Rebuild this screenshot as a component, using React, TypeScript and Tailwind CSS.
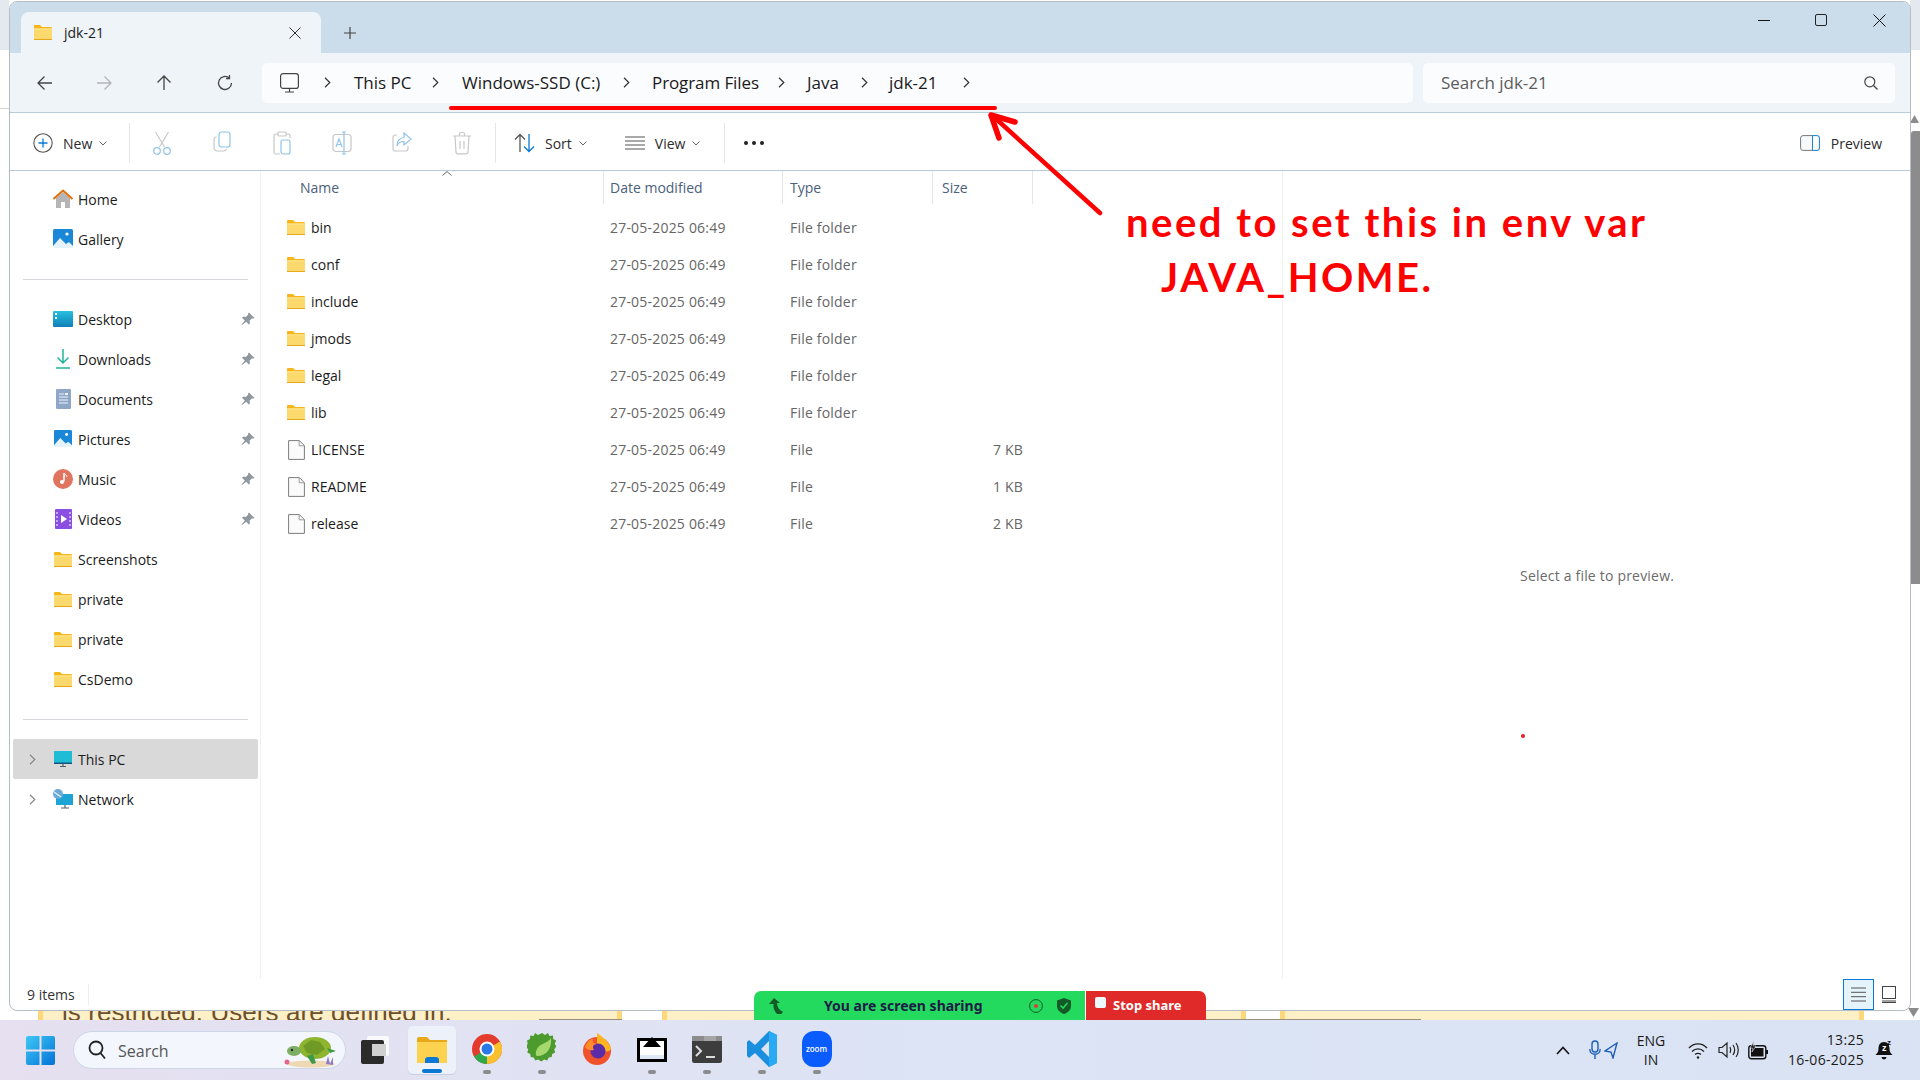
import React from "react";

const Folder = ({ w = 18, h = 15 }: { w?: number; h?: number }) => (
  <svg width={w} height={h} viewBox="0 0 18 15" className="shrink-0">
    <path d="M0 1a1 1 0 0 1 1-1h5l2 2h9a1 1 0 0 1 1 1v3H0z" fill="#f6b519" />
    <path d="M0 3.4h18V14a1 1 0 0 1-1 1H1a1 1 0 0 1-1-1z" fill="#fbd96d" />
    <path d="M0 3.4h18v1H0z" fill="#fde99b" />
    <path d="M0 14h18v1H0z" fill="#e9a81a" />
  </svg>
);
const FileIcon = () => (
  <svg width="17" height="20" viewBox="0 0 17 20" className="shrink-0">
    <path d="M.6.6h10.8l5 5v13.8H.6z" fill="#fbfbfb" stroke="#7d7d7d" strokeWidth="1" />
    <path d="M11.2.8v5h5" fill="none" stroke="#9a9a9a" strokeWidth="1" />
  </svg>
);
const Chevron = ({ c = "#333" }: { c?: string }) => (
  <svg width="7" height="11" viewBox="0 0 7 11" className="shrink-0"><path d="M1 .8l4.8 4.7L1 10.2" fill="none" stroke={c} strokeWidth="1.2" /></svg>
);
const Down = () => (
  <svg width="8" height="5" viewBox="0 0 8 5"><path d="M.5.5L4 4l3.5-3.5" fill="none" stroke="#666" strokeWidth="1" /></svg>
);
const Pin = () => (
  <svg width="14" height="14" viewBox="0 0 14 14">
    <path d="M8 .5l5.500 5.500-1.500.8-1-.5-2.400 2.400.4 2.600-1.200 1.200-2.700-2.700L1 13l-.4-.4 3.200-4.200L1 5.700 2.200 4.500l2.600.4L7.200 2.500l-.2-.9z" fill="#8f979f" />
  </svg>
);

const NavArrow = ({ d, c }: { d: string; c: string }) => (
  <svg width="18" height="18" viewBox="0 0 18 18"><path d={d} fill="none" stroke={c} strokeWidth="1.3" /></svg>
);

const HomeIcon = () => (
  <svg width="20" height="20" viewBox="0 0 20 20">
    <path d="M3 9l7-6 7 6v10H12v-6H8v6H3z" fill="#b5b5b5" />
    <path d="M.5 10L10 1.500 19.500 10" fill="none" stroke="#e2700f" strokeWidth="2" />
  </svg>
);
const PicIcon = ({ w = 20 }: { w?: number }) => (
  <svg width={w} height="20" viewBox="0 0 20 20">
    <rect x="0" y="0" width="20" height="19" rx="1.500" fill="#1a87d8" />
    <path d="M0 17l7-8 6 6 3-2 4 4v2H0z" fill="#e6f3fb" />
    <circle cx="14" cy="5" r="1.600" fill="#fff" />
  </svg>
);
const DesktopIcon = () => (
  <svg width="20" height="16" viewBox="0 0 20 16">
    <defs><linearGradient id="dg" x1="0" y1="0" x2="0" y2="1"><stop offset="0" stopColor="#29c0de" /><stop offset="1" stopColor="#0f7fb8" /></linearGradient></defs>
    <rect width="20" height="16" rx="1" fill="url(#dg)" />
    <rect x="2" y="2" width="2" height="2" fill="#fff" /><rect x="2" y="6" width="2" height="2" fill="#dff" />
  </svg>
);
const DownIcon = () => (
  <svg width="16" height="20" viewBox="0 0 16 20"><path d="M8 0v14M2.500 8.500L8 14l5.500-5.500M1 19h14" fill="none" stroke="#21b59b" strokeWidth="1.500" /></svg>
);
const DocIcon = () => (
  <svg width="15" height="20" viewBox="0 0 15 20"><rect width="15" height="20" rx="1" fill="#8ea7c6" /><path d="M3 5h5M3 8h9M3 11h9M3 14h9" stroke="#eef3f8" strokeWidth="1" /><rect x="9" y="4" width="3" height="2" fill="#eef3f8" /></svg>
);
const MusicIcon = () => (
  <svg width="20" height="20" viewBox="0 0 20 20"><circle cx="10" cy="10" r="10" fill="#e0745f" /><path d="M11 4v8.500" stroke="#fff" strokeWidth="1.500" /><circle cx="9" cy="13" r="2" fill="#fff" /><path d="M11 4c1 2 3 2 3 4" stroke="#fff" fill="none" /></svg>
);
const VideoIcon = () => (
  <svg width="17" height="20" viewBox="0 0 17 20"><rect width="17" height="20" rx="1" fill="#8a4fe0" /><path d="M6 6l6 4-6 4z" fill="#fff" /><path d="M2 3v14M15 3v14" stroke="#d9c6f8" strokeWidth="1.500" strokeDasharray="2 2" /></svg>
);
const PcIcon = () => (
  <svg width="18" height="16" viewBox="0 0 18 16"><rect width="18" height="12.500" fill="#1fbcd6" /><rect y="11.500" width="18" height="1.500" fill="#15557e" /><path d="M6 15.500h6M9 13v2" stroke="#4d5f6b" strokeWidth="1.200" /></svg>
);
const NetIcon = () => (
  <svg width="20" height="20" viewBox="0 0 20 20"><rect x="3" y="5" width="17" height="11" fill="#1ea3d6" /><path d="M8 19h8M12 16v3" stroke="#4d5f6b" strokeWidth="1.200" /><circle cx="5" cy="5" r="5" fill="#6eaad8" /><path d="M1 3l7 5" stroke="#d8ecf8" strokeWidth="1.500" /></svg>
);

const SideRow = ({ icon, label, pin, sel, chev }: { icon: React.ReactNode; label: string; pin?: boolean; sel?: boolean; chev?: boolean }) => (
  <div className={`relative flex h-10 items-center rounded-[2px] ${sel ? "bg-[#d9d9d9]" : ""}`}>
    <div className="flex w-[16px] ml-[11px] justify-center">{chev && <Chevron c="#888" />}</div>
    <div className="ml-[13px] flex w-[20px] justify-center">{icon}</div>
    <span className="ml-[5px] text-[14px] text-[#1b1b1b]">{label}</span>
    {pin && <span className="absolute right-[3px] top-[13px]"><Pin /></span>}
  </div>
);

const files: [string, string, string][] = [
  ["bin", "File folder", ""], ["conf", "File folder", ""], ["include", "File folder", ""], ["jmods", "File folder", ""],
  ["legal", "File folder", ""], ["lib", "File folder", ""], ["LICENSE", "File", "7 KB"], ["README", "File", "1 KB"], ["release", "File", "2 KB"],
];

const B = "#8fc4e8";
const G = "#c7c7c7";
const TB = ({ children }: { children: React.ReactNode }) => <div className="flex w-[60px] justify-center">{children}</div>;

const Toolbar = () => (
  <div className="flex h-[58px] shrink-0 items-center border-b border-[#b9cbdb] bg-white pt-[3px]">
    <div className="flex w-[119px] items-center pl-[23px]">
      <svg width="20" height="20" viewBox="0 0 20 20"><circle cx="10" cy="10" r="9.200" fill="none" stroke="#555" strokeWidth="1.100" /><path d="M10 5.500v9M5.500 10h9" stroke="#0a78d4" strokeWidth="1.300" /></svg>
      <span className="ml-[10px] text-[14px] text-[#2b2b2b]">New</span>
      <span className="ml-[7px] flex"><Down /></span>
    </div>
    <div className="h-10 w-px bg-[#e2e6ea]" />
    <div className="ml-[2px] flex">
      <TB><svg width="18" height="24" viewBox="0 0 18 24" fill="none" stroke={B} strokeWidth="1.200"><path d="M2.500 1l9 15M15.500 1l-9 15" stroke={G} /><circle cx="4" cy="20" r="3.300" /><circle cx="14" cy="20" r="3.300" /></svg></TB>
      <TB><svg width="18" height="21" viewBox="0 0 18 21" fill="none" strokeWidth="1.200"><rect x="6" y="1" width="11" height="15" rx="2.500" stroke={B} /><path d="M3.500 5.500C2 6 1 7 1 8.500v8C1 18.500 2.500 20 4.500 20h6c1.500 0 2.500-1 3-2" stroke={G} /></svg></TB>
      <TB><svg width="18" height="24" viewBox="0 0 18 24" fill="none" strokeWidth="1.200"><path d="M5 3H2.500C1.500 3 1 3.500 1 4.500v17c0 1 .5 1.500 1.500 1.500H7M13 3h2.500c1 0 1.500.5 1.500 1.500V7" stroke={G} /><rect x="5" y="1" width="8" height="4" rx="1" stroke={G} /><rect x="8" y="9" width="9" height="14" rx="2" stroke={B} /></svg></TB>
      <TB><svg width="20" height="24" viewBox="0 0 20 24" fill="none" strokeWidth="1.200"><rect x="1" y="3.500" width="18" height="17" rx="3" stroke={G} /><path d="M12 1v22M10 1h4M10 23h4" stroke={B} /><path d="M4 16l3-8 3 8M5 13.500h4" stroke={B} /></svg></TB>
      <TB><svg width="20" height="22" viewBox="0 0 20 22" fill="none" strokeWidth="1.200"><path d="M5 4H3.500C2 4 1 5 1 6.500v11C1 19 2 20 3.500 20h10c1.500 0 2.500-1 2.500-2.500V15" stroke={G} /><path d="M12 2l7 6-7 6v-3.500C8 10.500 6 12 5 15c0-5 3-8 7-8.500z" stroke={B} /></svg></TB>
      <TB><svg width="18" height="24" viewBox="0 0 18 24" fill="none" stroke={G} strokeWidth="1.200"><path d="M0 5h18M6.500 5V3c0-1 .5-1.500 1.500-1.500h2c1 0 1.500.5 1.500 1.500v2M2 5l1 16c0 1 .8 1.800 2 1.800h8c1.200 0 2-.8 2-1.800l1-16M7 10v8M11 10v8" /></svg></TB>
    </div>
    <div className="ml-[3px] h-10 w-px bg-[#e2e6ea]" />
    <div className="flex items-center pl-[18px]">
      <svg width="22" height="20" viewBox="0 0 22 20" fill="none" strokeWidth="1.300"><path d="M6 19V1.500M1 6.500l5-5 5 5" stroke="#555" /><path d="M15 1v17.500M10 13.500l5 5 5-5" stroke="#0a78d4" /></svg>
      <span className="ml-[9px] text-[14px] text-[#2b2b2b]">Sort</span>
      <span className="ml-[7px] flex"><Down /></span>
    </div>
    <div className="ml-[38px] flex items-center">
      <svg width="20" height="14" viewBox="0 0 20 14" fill="none" stroke="#555" strokeWidth="1.200"><path d="M0 1h20M0 5h20M0 9h20M0 13h20" /></svg>
      <span className="ml-[10px] text-[14px] text-[#2b2b2b]">View</span>
      <span className="ml-[7px] flex"><Down /></span>
    </div>
    <div className="ml-[24px] h-10 w-px bg-[#e2e6ea]" />
    <div className="ml-[19px] flex gap-[4px]">
      <i className="size-[4px] rounded-full bg-[#222]" /><i className="size-[4px] rounded-full bg-[#222]" /><i className="size-[4px] rounded-full bg-[#222]" />
    </div>
    <div className="ml-auto flex items-center pr-[28px]">
      <svg width="20" height="16" viewBox="0 0 20 16" fill="none"><rect x=".6" y=".6" width="18.800" height="14.800" rx="2.500" fill="#f7f9fb" stroke="#777" /><path d="M12.500.6h4.400a2.500 2.500 0 0 1 2.500 2.500v9.800a2.500 2.500 0 0 1-2.500 2.500h-4.400z" fill="#fff" stroke="#1a86d8" /></svg>
      <span className="ml-[11px] text-[14px] text-[#2b2b2b]">Preview</span>
    </div>
  </div>
);

const Window = () => (
  <div className="absolute left-[9px] top-[1px] flex h-[1010px] w-[1902px] flex-col overflow-hidden rounded-[8px] border border-[#b4bcc4] bg-white">
    {/* title */}
    <div className="flex h-[51px] shrink-0 items-end bg-[#cbdcea] pl-[11px]">
      <div className="flex h-[41px] w-[300px] items-center rounded-t-[8px] bg-[#eff4f9] pl-[13px] pr-[20px]">
        <Folder w={18} h={15} />
        <span className="ml-[12px] text-[14px] text-[#1b1b1b]">jdk-21</span>
        <svg className="ml-auto" width="12" height="12" viewBox="0 0 12 12"><path d="M.5.500l11 11M11.500.500l-11 11" stroke="#333" strokeWidth="1" /></svg>
      </div>
      <div className="ml-[23px] flex h-[41px] items-center">
        <svg width="12" height="12" viewBox="0 0 12 12"><path d="M6 0v12M0 6h12" stroke="#444" strokeWidth="1.200" /></svg>
      </div>
      <div className="ml-auto flex h-[51px] items-center self-start pb-[15px]">
        <span className="h-px w-[12px] bg-[#111]" />
        <span className="ml-[45px] h-[12px] w-[12px] rounded-[2px] border-[1.5px] border-[#222]" />
        <svg className="ml-[46px] mr-[24px]" width="13" height="13" viewBox="0 0 13 13"><path d="M.5.500l12 12M12.500.500l-12 12" stroke="#111" strokeWidth="1" /></svg>
      </div>
    </div>
    {/* nav */}
    <div className="flex h-[60px] shrink-0 items-center border-b border-[#b9cbdb] bg-[#eff4f9]">
      <div className="flex w-[252px] items-center pl-[26px]">
        <NavArrow d="M16 9H2M8.500 2.500L2 9l6.500 6.500" c="#444" />
        <div className="ml-[41px]"><NavArrow d="M2 9h14M9.500 2.500L16 9l-6.500 6.500" c="#b5b5b5" /></div>
        <div className="ml-[42px]"><NavArrow d="M9 16V2M2.500 8.500L9 2l6.500 6.500" c="#444" /></div>
        <div className="ml-[43px]"><NavArrow d="M15.500 9a6.500 6.500 0 1 1-2.200-4.900M13.500 1v3.500H10" c="#444" /></div>
      </div>
      <div className="flex h-[40px] w-[1151px] items-center rounded-[5px] bg-[#fbfcfe] pl-[18px]">
        <svg width="19" height="20" viewBox="0 0 19 20" fill="none" stroke="#444" strokeWidth="1.200"><rect x=".6" y=".6" width="17.800" height="14.800" rx="2.500" /><path d="M9.500 15.500v3M5 19h9" /></svg>
        <div className="ml-[25px] flex"><Chevron /></div>
        <span className="ml-[23px] w-[78px] text-[17px] whitespace-nowrap text-[#1a1a1a]">This PC</span>
        <Chevron />
        <span className="ml-[23px] w-[161px] text-[17px] whitespace-nowrap text-[#1a1a1a]">Windows-SSD (C:)</span>
        <Chevron />
        <span className="ml-[22px] w-[126px] text-[17px] tracking-[-0.1px] whitespace-nowrap text-[#1a1a1a]">Program Files</span>
        <Chevron />
        <span className="ml-[22px] w-[54px] text-[17px] whitespace-nowrap text-[#1a1a1a]">Java</span>
        <Chevron />
        <span className="ml-[21px] w-[74px] text-[17px] whitespace-nowrap text-[#1a1a1a]">jdk-21</span>
        <Chevron />
      </div>
      <div className="ml-[10px] flex h-[40px] w-[472px] items-center justify-between rounded-[5px] bg-[#fbfcfe] pl-[18px] pr-[17px]">
        <span className="text-[17px] text-[#5c5c5c]">Search jdk-21</span>
        <svg width="14" height="14" viewBox="0 0 14 14" fill="none" stroke="#444" strokeWidth="1.200"><circle cx="5.800" cy="5.800" r="5" /><path d="M9.500 9.500l4 4" /></svg>
      </div>
    </div>
    <Toolbar />
    {/* body */}
    <div className="flex min-h-0 flex-1">
      <aside className="w-[251px] shrink-0 border-r border-[#f0f0f0] pl-[3px] pr-[2px] pt-[8px]">
        <SideRow icon={<HomeIcon />} label="Home" />
        <SideRow icon={<PicIcon />} label="Gallery" />
        <div className="flex h-10 items-center px-[10px]"><div className="h-px w-full bg-[#d5d9dd]" /></div>
        <SideRow icon={<DesktopIcon />} label="Desktop" pin />
        <SideRow icon={<DownIcon />} label="Downloads" pin />
        <SideRow icon={<DocIcon />} label="Documents" pin />
        <SideRow icon={<PicIcon w={18} />} label="Pictures" pin />
        <SideRow icon={<MusicIcon />} label="Music" pin />
        <SideRow icon={<VideoIcon />} label="Videos" pin />
        <SideRow icon={<Folder />} label="Screenshots" />
        <SideRow icon={<Folder />} label="private" />
        <SideRow icon={<Folder />} label="private" />
        <SideRow icon={<Folder />} label="CsDemo" />
        <div className="flex h-10 items-center px-[10px]"><div className="h-px w-full bg-[#d5d9dd]" /></div>
        <SideRow icon={<PcIcon />} label="This PC" sel chev />
        <SideRow icon={<NetIcon />} label="Network" chev />
      </aside>
      <main className="relative w-[1022px] shrink-0 border-r border-[#f0f0f0]">
        <div className="flex h-[33px] items-center text-[14px] text-[#4c607a]">
          <div className="relative flex h-full w-[343px] items-center border-r border-[#e5e5e5] pl-[39px]">
            Name
            <svg className="absolute left-[181px] top-0" width="10" height="5" viewBox="0 0 10 5"><path d="M.5 4.500L5 .5l4.500 4" fill="none" stroke="#666" /></svg>
          </div>
          <div className="flex h-full w-[179px] items-center border-r border-[#e5e5e5] pl-[6px]">Date modified</div>
          <div className="flex h-full w-[150px] items-center border-r border-[#e5e5e5] pl-[7px]">Type</div>
          <div className="flex h-full w-[100px] items-center border-r border-[#e5e5e5] pl-[9px]">Size</div>
        </div>
        <div className="pt-[5px]">
          {files.map(([n, t, s]) => (
            <div key={n} className="flex h-[37px] items-center text-[14px] text-[#666]">
              <div className="flex w-[343px] items-center pl-[26px]">
                <div className="flex w-[18px] justify-center">{t === "File" ? <FileIcon /> : <Folder />}</div>
                <span className="ml-[6px] text-[#1b1b1b]">{n}</span>
              </div>
              <div className="w-[179px] pl-[6px] tracking-[0.2px]">27-05-2025 06:49</div>
              <div className="w-[150px] pl-[7px] tracking-[0.2px]">{t}</div>
              <div className="w-[90px] text-right tracking-[0.2px]">{s}</div>
            </div>
          ))}
        </div>
      </main>
      <section className="relative flex-1">
        <span className="absolute left-[237px] top-[394px] text-[14px] tracking-[0.2px] text-[#6b6b6b]">Select a file to preview.</span>
        <span className="absolute left-[238px] top-[563px] size-[4px] rounded-full bg-[#e02020]" />
      </section>
    </div>
    {/* status */}
    <div className="relative flex h-[31px] shrink-0 items-center pl-[17px] text-[14px] text-[#333]">
      <span>9 items</span>
      <span className="ml-[13px] h-[22px] w-px bg-[#eeeeee]" />
      <div className="ml-auto flex items-center self-start pr-[14px]">
        <div className="flex h-[31px] w-[31px] items-center justify-center border border-[#0a78d4] bg-[#e5f3fb]">
          <svg width="15" height="15" viewBox="0 0 15 15"><path d="M0 1h15M0 5.300h15M0 9.700h15M0 14h15" stroke="#555" strokeWidth="1" /></svg>
        </div>
        <svg className="ml-[8px]" width="14" height="17" viewBox="0 0 14 17" fill="none" stroke="#444"><rect x=".5" y=".5" width="13" height="12" /><path d="M0 15h14M0 16.500h14" /></svg>
      </div>
    </div>
  </div>
);

const Ind = ({ c = "#8c8c8c" }: { c?: string }) => <span className="absolute bottom-[6px] left-1/2 h-[4px] w-[8px] -translate-x-1/2 rounded-full" style={{ background: c }} />;
const App_ = ({ children, ind }: { children: React.ReactNode; ind?: boolean }) => (
  <div className="relative flex h-[60px] w-[55px] shrink-0 items-center justify-center pb-[2px]">{children}{ind && <Ind />}</div>
);

const Taskbar = () => (
  <div className="flex h-[60px] items-center bg-gradient-to-r from-[#e6e0f0] via-[#dce4f5] to-[#dae3f4]">
    <div className="ml-[26px]">
      <svg width="29" height="29" viewBox="0 0 29 29"><defs><linearGradient id="wg" x1="0" y1="0" x2="1" y2="1"><stop offset="0" stopColor="#3fc8f6" /><stop offset="1" stopColor="#0472d6" /></linearGradient></defs><path d="M0 2a2 2 0 0 1 2-2h11.500v13.500H0zM15.500 0H27a2 2 0 0 1 2 2v11.500H15.500zM0 15.500h13.500V29H2a2 2 0 0 1-2-2zM15.500 15.500H29V27a2 2 0 0 1-2 2H15.500z" fill="url(#wg)" /></svg>
    </div>
    <div className="relative ml-[18px] flex h-[38px] w-[273px] items-center rounded-full border border-[#cdd6e6] bg-[#f3f6fc] pl-[14px]">
      <svg width="18" height="20" viewBox="0 0 18 20" fill="none" stroke="#222" strokeWidth="1.800"><circle cx="8" cy="8" r="6.500" /><path d="M12.500 13l4.500 5.500" /></svg>
      <span className="ml-[12px] pt-[1px] text-[16px] text-[#555]">Search</span>
      <svg className="absolute right-[6px] top-[2px]" width="56" height="34" viewBox="0 0 56 34">
        <ellipse cx="28" cy="30" rx="24" ry="3.500" fill="#efd9b4" />
        <ellipse cx="32" cy="14" rx="16" ry="11" fill="#8fb52f" />
        <path d="M20 12l8-6 9 2 5 7-8 6-10-2z" fill="#6f9a25" />
        <ellipse cx="11" cy="17" rx="7" ry="5" fill="#7cae64" />
        <path d="M24 22l5 8 4-1-3-9zM44 14l9 3-6 2z" fill="#3c9a48" />
        <circle cx="9" cy="16" r="1.200" fill="#223" />
        <circle cx="4" cy="28" r="2.500" fill="#e5648f" />
        <path d="M43 30l2-8 2 8 3-7 0 8z" fill="#8e7ac9" />
      </svg>
    </div>
    <div className="flex h-[60px] w-[58px] shrink-0 items-center justify-center">
      <div className="relative h-[28px] w-[28px]">
        <span className="absolute right-0 top-0 h-[20px] w-[22px] rounded-[2px] bg-white/80" />
        <span className="absolute bottom-0 left-0 h-[24px] w-[23px] rounded-[2px] bg-[#2b2b2b]" />
        <span className="absolute right-[3px] top-[8px] h-[12px] w-[14px] bg-[#d0d0d0]" />
      </div>
    </div>
    <div className="relative flex h-[60px] w-[55px] shrink-0 items-center justify-center">
      <div className="absolute left-[4px] top-[6px] h-[48px] w-[48px] rounded-[5px] bg-[#edf1f9] shadow-[0_1px_1px_#c5cfe0]" />
      <svg className="relative" width="30" height="26" viewBox="0 0 30 26"><path d="M0 2a2 2 0 0 1 2-2h8l3 3h17v5H0z" fill="#e9a81a" /><path d="M0 5h30v21H0z" fill="#fcd24f" /><path d="M8 26v-3a3 3 0 0 1 3-3h8a3 3 0 0 1 3 3v3z" fill="#0a78d4" /></svg>
      <span className="absolute bottom-[7px] left-[18px] h-[4px] w-[20px] rounded-full bg-[#0a78d4]" />
    </div>
    <App_ ind>
      <svg width="30" height="30" viewBox="0 0 30 30"><circle cx="15" cy="15" r="15" fill="#e33b2e" /><path d="M15 15L2 22.500A15 15 0 0 0 15 30z" fill="#2fa84f" /><path d="M15 15l13 -7.500A15 15 0 0 1 15 30z" fill="#fbc02d" /><circle cx="15" cy="15" r="7.500" fill="#fff" /><circle cx="15" cy="15" r="5.500" fill="#2979e8" /></svg>
    </App_>
    <App_ ind>
      <svg width="30" height="34" viewBox="0 0 30 34"><path d="M15 1l3 2 3-2 1.500 3 3.500-.5.200 3.500 3 1.500-1.500 3 1.500 3-2 3 1 3-3 1.500-.5 3-3 .5-1.500 3-3-1-3 2-3-2-3 1-1.500-3-3-.5-.5-3-3-1.500 1-3-2-3 1.500-3L0 8.500 3 7l.2-3.500 3.500.5L8 1l3 2z" fill="#4d9a2e" /><path d="M24 6c1 10-4 18-14 18-1 0-2-3 0-7 3-6 10-5 14-11z" fill="#a5d86d" /></svg>
    </App_>
    <App_>
      <svg width="28" height="32" viewBox="0 0 28 32"><circle cx="14" cy="18" r="14" fill="#f0532b" /><path d="M14 0c6 4 11 8 14 15-2 6-6 2-14 3z" fill="#ffb420" /><circle cx="15" cy="18" r="7.500" fill="#5b2ba8" /><path d="M2 14c2-6 6-8 8-8-1 3 0 4 4 5-4 0-5 3-3 6-4 1-8-1-9-3z" fill="#ff8b2b" /></svg>
    </App_>
    <App_ ind>
      <svg width="30" height="26" viewBox="0 0 30 26"><rect x="1.500" y="3.500" width="27" height="21" fill="#fff" stroke="#000" strokeWidth="3" /><path d="M15 1l9 10H6z" fill="#000" /><path d="M3 19h24v4H3z" fill="#dfe7f5" /></svg>
    </App_>
    <App_ ind>
      <svg width="30" height="27" viewBox="0 0 30 27"><rect width="30" height="27" rx="2.500" fill="#3d3d3d" /><rect width="30" height="5" fill="#8c8c8c" /><rect x="12" width="12" height="5" fill="#a5a5a5" /><path d="M4 10l5 5-5 5" fill="none" stroke="#dcdcdc" strokeWidth="2" /><path d="M14 21h9" stroke="#dcdcdc" strokeWidth="2" /></svg>
    </App_>
    <App_ ind>
      <svg width="30" height="36" viewBox="0 0 30 36"><path d="M22 0l8 4v28l-8 4-14-14-6 5-2-2v-14l2-2 6 5zM22 10l-8 8 8 8z" fill="#1a8fe0" /><path d="M22 0l8 4v28l-8 4z" fill="#29aaf4" /></svg>
    </App_>
    <App_ ind>
      <div className="flex h-[36px] w-[30px] items-center justify-center rounded-[12px] bg-[#0b5cff] text-[8px] font-semibold text-white">zoom</div>
    </App_>
    <div className="ml-auto flex items-center pr-[16px] text-[#1a1a1a]">
      <div className="flex w-[34px] justify-center">
        <svg width="14" height="9" viewBox="0 0 14 9"><path d="M1 8l6-6.500L13 8" fill="none" stroke="#111" strokeWidth="1.600" /></svg>
      </div>
      <div className="flex w-[46px] items-center justify-center gap-[3px]">
        <svg width="12" height="20" viewBox="0 0 12 20" fill="none" stroke="#1c5fb8" strokeWidth="1.400"><rect x="3" y="1" width="6" height="11" rx="3" /><path d="M.8 9c0 7 10.400 7 10.400 0M6 15v4" /></svg>
        <svg width="14" height="17" viewBox="0 0 14 17" fill="none" stroke="#1c5fb8" strokeWidth="1.400"><path d="M13 1L1 9l6 1 2 6z" /></svg>
      </div>
      <div className="w-[50px] text-center text-[14px] leading-[19px]">ENG<br />IN</div>
      <div className="ml-[8px] flex w-[28px] justify-center">
        <svg width="20" height="17" viewBox="0 0 20 17" fill="none" stroke="#222" strokeWidth="1.400"><path d="M1 6c5-5.500 13-5.500 18 0M4 9.500c3.500-3.500 8.500-3.500 12 0M7 12.500c2-1.500 4-1.500 6 0" /><circle cx="10" cy="15.500" r="1.200" fill="#222" stroke="none" /></svg>
      </div>
      <div className="flex w-[32px] justify-center">
        <svg width="21" height="18" viewBox="0 0 21 18" fill="none" stroke="#222" strokeWidth="1.200"><path d="M1 6.500h3L9 2v14l-5-4.500H1zM12 6c1 2 1 4 0 6M15 4c2 3 2 7 0 10M18 2c3 4 3 10 0 14" /></svg>
      </div>
      <div className="flex w-[28px] justify-center">
        <svg width="20" height="19" viewBox="0 0 20 19"><rect x=".8" y="4.800" width="17" height="13" rx="2.500" fill="none" stroke="#111" strokeWidth="1.400" /><rect x="3" y="7" width="12.500" height="8.500" fill="#111" /><rect x="18" y="9" width="2" height="4" fill="#111" /><path d="M6 0L2 7h3l-1 4 4-6H5z" fill="#111" stroke="#dce4f5" strokeWidth=".6" /></svg>
      </div>
      <div className="w-[92px] text-right text-[14px] leading-[20px] tracking-[0.3px]">13:25<br />16-06-2025</div>
      <div className="flex w-[40px] justify-center">
        <svg width="18" height="24" viewBox="0 0 18 24"><path d="M9 4C5 4 3.500 7 3.500 11c0 3-1.500 4.500-3 6h17c-1.500-1.500-3-3-3-6 0-4-1.500-7-5.500-7z" fill="#111" /><path d="M6.500 19h5a2.500 2.500 0 0 1-5 0z" fill="#111" /><text x="7" y="13" fontSize="9" fontWeight="700" fill="#fff" fontFamily="Liberation Sans">z</text><text x="12" y="7" fontSize="8" fontWeight="700" fill="#111" fontFamily="Liberation Sans">z</text></svg>
      </div>
    </div>
  </div>
);

const ZoomBar = () => (
  <div className="absolute bottom-0 left-[754px] flex h-[29px] w-[452px]">
    <div className="flex w-[331px] items-center rounded-tl-[7px] bg-[#23da5f] pl-[15px]">
      <svg width="16" height="16" viewBox="0 0 16 16"><path d="M5 0l6 5H8c0 4 2 7 6 9-1 1-1.500 2-2 2H8C5 13 4 9 4.500 6H0z" fill="#135a26" /></svg>
      <span className="ml-[39px] text-[14px] font-bold whitespace-nowrap text-[#1b1b46] font-['Noto_Sans',sans-serif]">You are screen sharing</span>
      <svg className="ml-[46px]" width="14" height="14" viewBox="0 0 14 14"><circle cx="7" cy="7" r="6.400" fill="none" stroke="#135a26" /><circle cx="7" cy="7" r="2" fill="#e03a3a" /></svg>
      <svg className="ml-[14px]" width="14" height="16" viewBox="0 0 14 16"><path d="M7 0l7 2.500V8c0 4-3 6.500-7 8-4-1.500-7-4-7-8V2.500z" fill="#135a26" /><path d="M3.500 7.500L6 10l4.500-5" fill="none" stroke="#23da5f" strokeWidth="1.600" /></svg>
    </div>
    <div className="w-px bg-white" />
    <div className="flex flex-1 items-start rounded-tr-[7px] bg-[#e02a2a] pl-[9px] pt-[6px]">
      <span className="size-[11px] rounded-[2px] bg-[#ecf8fb]" />
      <span className="-mt-[1px] ml-[7px] text-[13px] leading-[18px] font-bold whitespace-nowrap text-white font-['Noto_Sans',sans-serif]">Stop share</span>
    </div>
  </div>
);

export default function App() {
  return (
    <div className="flex h-screen w-screen flex-col overflow-hidden bg-white font-['Open_Sans',sans-serif]">
      <div className="relative h-[1020px] overflow-hidden bg-white">
        <div className="absolute left-0 top-0 h-[50px] w-[9px] bg-[#e4e8ef]" />
        <div className="absolute left-0 top-[108px] h-px w-[9px] bg-[#d5d5d5]" />
        <div className="absolute right-0 top-0 h-[50px] w-[10px] bg-[#e4e8ef]" />
        {/* yellow background document */}
        <div className="absolute left-[38px] top-[1011px] h-[9px] w-[584px] overflow-hidden border-x-[5px] border-[#fcd87a] bg-[#fdefc6] font-['Liberation_Sans',sans-serif]">
          <span className="absolute left-[19px] -top-[14px] text-[26px] leading-[30px] tracking-[0.07px] whitespace-nowrap text-[#6e4f2c]">is restricted. Users are defined in:</span>
        </div>
        <div className="absolute left-[662px] top-[1011px] h-[9px] w-[584px] border-x-[5px] border-[#fcd87a] bg-[#fdefc6]" />
        <div className="absolute left-[1280px] top-[1011px] h-[9px] w-[584px] border-x-[5px] border-[#fcd87a] bg-[#fdefc6]" />
        <div className="absolute left-[539px] top-[1019px] h-px w-[83px] bg-[#9a8f78]" />
        <div className="absolute left-[1206px] top-[1019px] h-px w-[215px] bg-[#9a8f78]" />
        {/* scrollbar of the window behind */}
        <svg className="absolute right-[1px] top-[115px]" width="9" height="8" viewBox="0 0 9 8"><path d="M4.500 0L9 8H0z" fill="#8c8c8c" /></svg>
        <div className="absolute right-0 top-[131px] h-[453px] w-[9px] rounded-tl-[3px] bg-[#8c8c8c]" />
        <svg className="absolute right-[1px] top-[1008px]" width="11" height="9" viewBox="0 0 11 9"><path d="M5.500 9L11 0H0z" fill="#8c8c8c" /></svg>
        <Window />
        {/* annotations */}
        <div className="absolute left-[449px] top-[106px] h-[4px] w-[548px] rounded-full bg-[#ff0000]" />
        <svg className="absolute left-[980px] top-[105px]" width="130" height="115" viewBox="0 0 130 115">
          <path d="M120 108L14 12" stroke="#ff0000" strokeWidth="4.500" strokeLinecap="round" />
          <path d="M11 10L35 17M11 10L19 33" stroke="#ff0000" strokeWidth="5.500" strokeLinecap="round" />
        </svg>
        <div className="absolute left-[1126px] top-[196px] font-['Lato',sans-serif] text-[40px] leading-[52px] font-bold tracking-[2.500px] whitespace-nowrap text-[#ff0000]">need to set this in env var</div>
        <div className="absolute left-[1161px] top-[251px] font-['Lato',sans-serif] text-[40px] leading-[52px] font-bold tracking-[2.500px] whitespace-nowrap text-[#ff0000]">JAVA_HOME.</div>
        <ZoomBar />
      </div>
      <Taskbar />
    </div>
  );
}
